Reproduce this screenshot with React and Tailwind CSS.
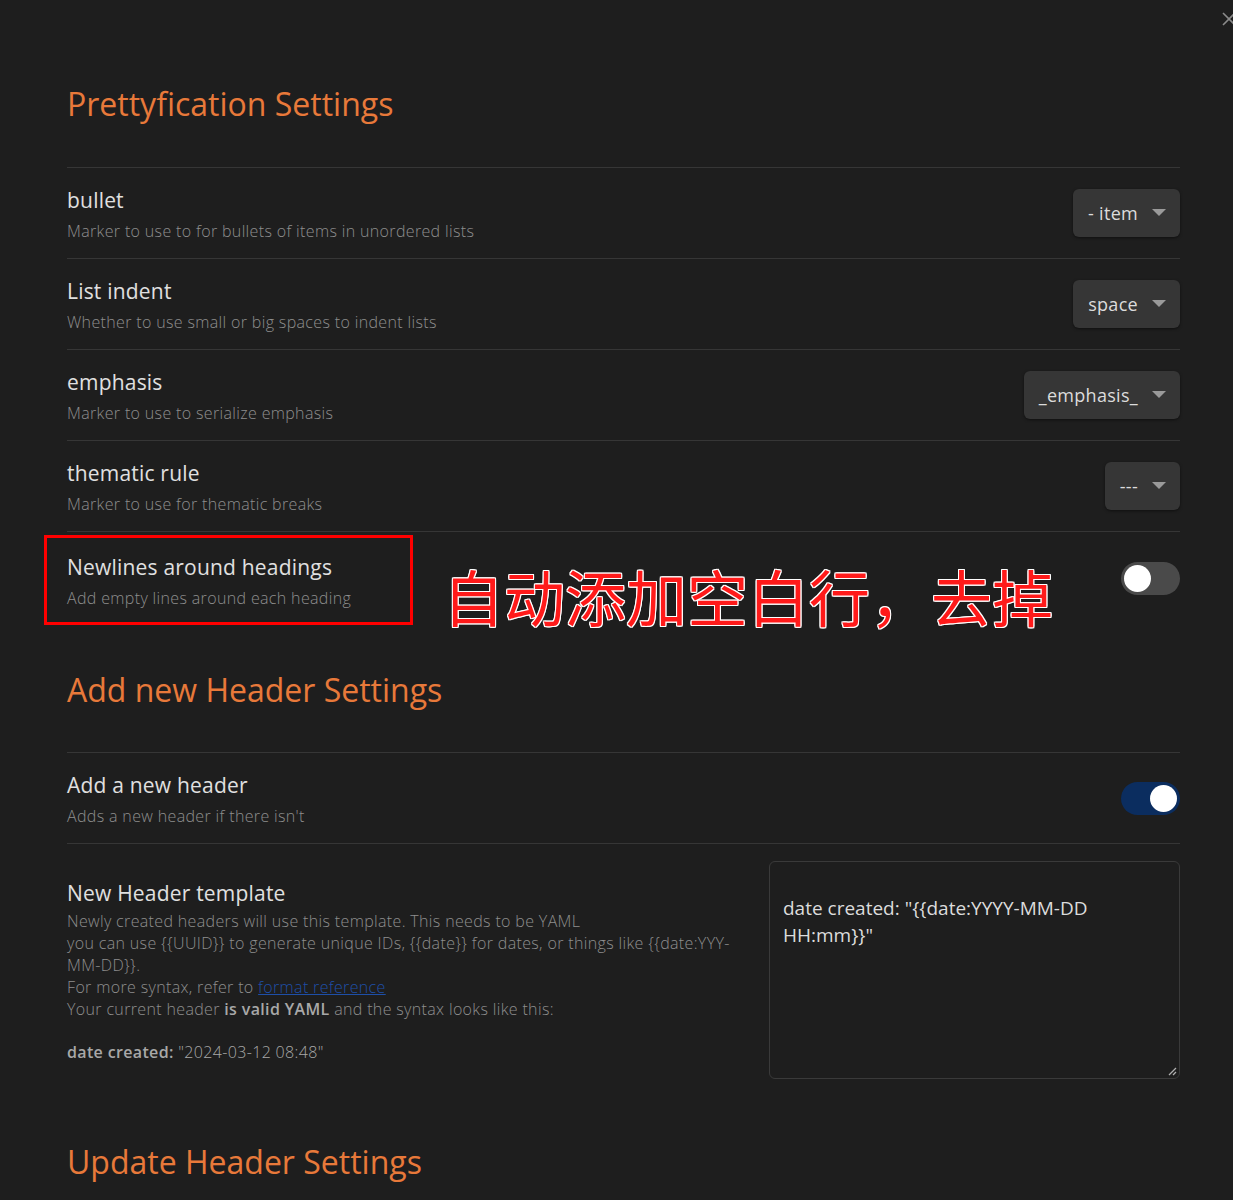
import React from 'react';

const font = { fontFamily: '"Open Sans", "Noto Sans", sans-serif' };

function Dropdown({ value }) {
  return (
    <div className="flex h-[48px] items-center gap-[14px] rounded-[6px] bg-[#363636] pl-[15px] pr-[14px] text-[18px] tracking-[0.3px] text-[#dcdcdc] shadow-[0_1px_3px_rgba(0,0,0,0.5)]">
      <span>{value}</span>
      <svg width="14" height="8" viewBox="0 0 14 8">
        <path d="M0 0 L14 0 L7 7 Z" fill="#9a9a9a" />
      </svg>
    </div>
  );
}

function Toggle({ on }) {
  return (
    <div
      className={
        'flex h-[33px] w-[59px] items-center rounded-full px-[3px] ' +
        (on ? 'justify-end bg-[#0b2d5f]' : 'justify-start bg-[#4a4a4a]')
      }
    >
      <div className="h-[27px] w-[27px] rounded-full bg-white" />
    </div>
  );
}

function Info({ name, desc }) {
  return (
    <div className="flex flex-col pt-[6px]">
      <div className="text-[21px] leading-[28px] tracking-[0.2px] text-[#e0e0e0]">{name}</div>
      <div className="mt-[2px] text-[16px] font-light leading-[30px] tracking-[0.35px] text-[#8e8e8e]">{desc}</div>
    </div>
  );
}

function Row({ name, desc, children }) {
  return (
    <div className="flex h-[91px] items-center justify-between border-t border-[#363636]">
      <Info name={name} desc={desc} />
      {children}
    </div>
  );
}

function SectionTitle({ children }) {
  return <h2 className="text-[32px] font-normal leading-[40px] text-[#e8793a]">{children}</h2>;
}

export default function App() {
  return (
    <div className="relative min-h-[1200px] w-[1233px] overflow-hidden bg-[#1e1e1e]" style={font}>
      {/* close */}
      <svg className="absolute left-[1222px] top-[12px]" width="14" height="14" viewBox="0 0 14 14">
        <path d="M1 1 L13 13 M13 1 L1 13" stroke="#8a8a8a" strokeWidth="1.6" />
      </svg>

      <div className="ml-[67px] w-[1113px] pt-[84px]">
        <SectionTitle>Prettyfication Settings</SectionTitle>
        <div className="mt-[43px]">
          <Row name="bullet" desc="Marker to use to for bullets of items in unordered lists">
            <Dropdown value="- item" />
          </Row>
          <Row name="List indent" desc="Whether to use small or big spaces to indent lists">
            <Dropdown value="space" />
          </Row>
          <Row name="emphasis" desc="Marker to use to serialize emphasis">
            <Dropdown value="_emphasis_" />
          </Row>
          <Row name="thematic rule" desc="Marker to use for thematic breaks">
            <Dropdown value="---" />
          </Row>
          <div className="flex h-[94px] items-center border-t border-[#363636]">
            <div className="-ml-[23px] mt-[3px] flex h-[90px] w-[369px] flex-col justify-center border-[3px] border-[#ff0000] pl-[20px]">
              <Info name="Newlines around headings" desc="Add empty lines around each heading" />
            </div>
            <div
              className="ml-[30px] mt-[34px] text-[61px] leading-[64px] text-[#ff1a1a]"
              style={{
                fontFamily: '"Noto Sans CJK SC", sans-serif',
                textShadow:
                  '1px 1px 0 #fff, -1px -1px 0 #fff, 1px -1px 0 #fff, -1px 1px 0 #fff, 0 1px 0 #fff, 1px 0 0 #fff, 0 -1px 0 #fff, -1px 0 0 #fff',
              }}
            >
              自动添加空白行，去掉
            </div>
            <div className="ml-auto">
              <Toggle on={false} />
            </div>
          </div>
        </div>

        <div className="mt-[45px]">
          <SectionTitle>Add new Header Settings</SectionTitle>
        </div>
        <div className="mt-[42px]">
          <Row name="Add a new header" desc="Adds a new header if there isn't">
            <Toggle on={true} />
          </Row>
          <div className="flex justify-between border-t border-[#363636] pt-[17px]">
            <div className="w-[680px] pt-[18px]">
              <div className="text-[21px] leading-[28px] tracking-[0.2px] text-[#e0e0e0]">New Header template</div>
              <div className="mt-[3px] text-[16px] font-light leading-[22px] tracking-[0.35px] text-[#8e8e8e]">
                <div>Newly created headers will use this template. This needs to be YAML</div>
                <div>you can use {'{{UUID}}'} to generate unique IDs, {'{{date}}'} for dates, or things like {'{{date:YYY-MM-DD}}'}.</div>
                <div>
                  For more syntax, refer to{' '}
                  <span className="text-[#1e4fa8] underline">format reference</span>
                </div>
                <div>
                  Your current header <span className="font-semibold text-[#a8a8a8]">is valid YAML</span> and the syntax looks like this:
                </div>
                <div className="h-[21px]" />
                <div className="text-[#a8a8a8]">
                  <span className="font-semibold">date created:</span> "2024-03-12 08:48"
                </div>
              </div>
            </div>
            <div className="relative h-[218px] w-[411px] rounded-[6px] border border-[#3a3a3a] px-[13px] pt-[33px] text-[19px] leading-[27px] text-[#dcdcdc]">
              <div>date created: "{'{{date:YYYY-MM-DD'}</div>
              <div>HH:mm{'}}'}"</div>
              <svg className="absolute bottom-[2px] right-[2px]" width="10" height="10" viewBox="0 0 10 10">
                <path d="M9 2 L2 9 M9 6 L6 9" stroke="#b0b0b0" strokeWidth="1.3" />
              </svg>
            </div>
          </div>
        </div>

        <div className="mt-[63px]">
          <SectionTitle>Update Header Settings</SectionTitle>
        </div>
      </div>
    </div>
  );
}
